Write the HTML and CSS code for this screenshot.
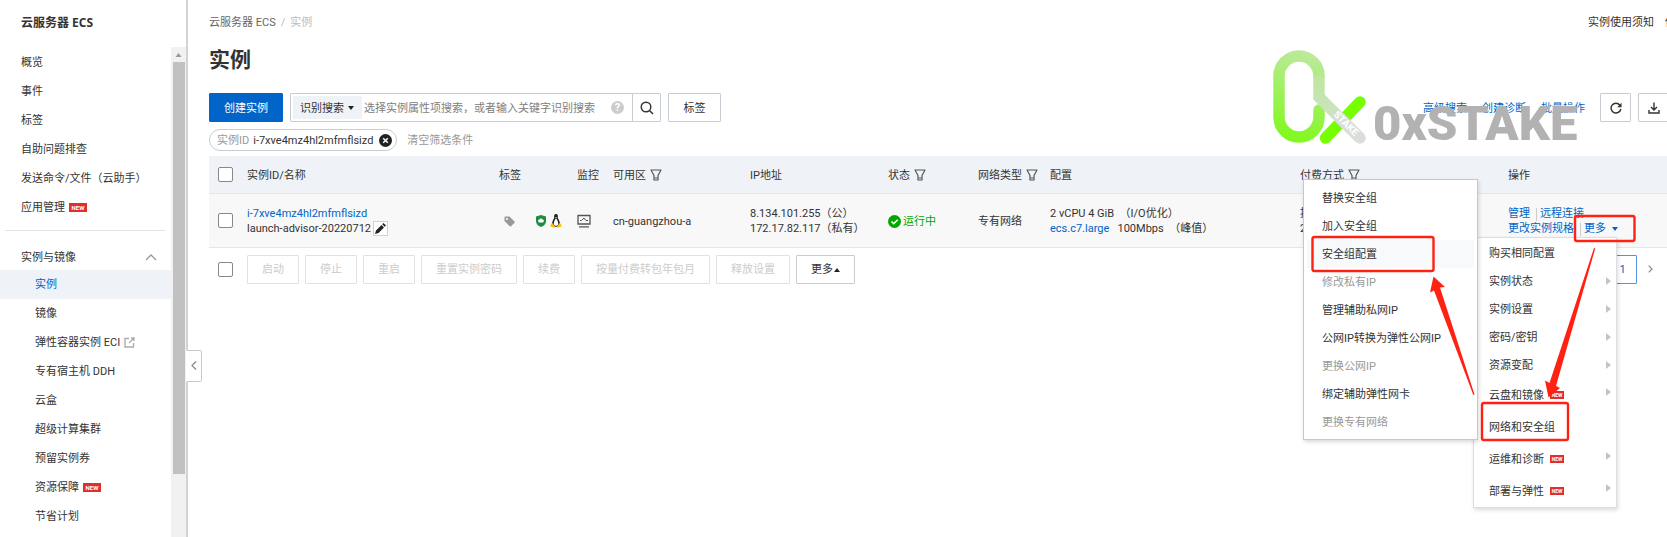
FILE: index.html
```
<!DOCTYPE html>
<html lang="zh-CN">
<head>
    <meta charset="UTF-8" />
    <meta name="viewport" content="width=device-width, initial-scale=1.0"/>
    <title>云服务器 ECS - 实例</title>
    <link rel="stylesheet" href="styles.css">
</head>
<body>

<!-- shared icons -->
<svg class="defs" width="0" height="0" aria-hidden="true">
    <symbol id="filter" viewBox="0 0 12 12">
        <path d="M1 1h10L8 6.500v4.500H4V6.500z" fill="none" stroke="#555" stroke-width="1.200" stroke-linejoin="round"/>
        <path d="M4.500 9h3" stroke="#555"/>
    </symbol>
</svg>

<div class="app">
    <aside class="sidebar">
        <div class="product">云服务器 ECS</div>
        <div class="nav-wrap">
            <nav class="nav">
                <ul class="nav-list">
                    <li><a href="#">概览</a></li>
                    <li><a href="#">事件</a></li>
                    <li><a href="#">标签</a></li>
                    <li><a href="#">自助问题排查</a></li>
                    <li><a href="#">发送命令/文件（云助手）</a></li>
                    <li><a href="#">应用管理 <span class="new">NEW</span></a></li>
                </ul>
                <button type="button" class="group">实例与镜像
                    <svg width="12" height="7" viewBox="0 0 12 7"><path d="M1 6l5-5 5 5" fill="none" stroke="#999" stroke-width="1.300"/></svg>
                </button>
                <ul class="nav-list sub">
                    <li class="active"><a href="#">实例</a></li>
                    <li><a href="#">镜像</a></li>
                    <li><a href="#">弹性容器实例 ECI
                        <svg width="11" height="11" viewBox="0 0 11 11"><path d="M5 1.500H1v8.500h8.500V6M7 1h3v3M10 1L5 6" fill="none" stroke="#aaa" stroke-width="1.300"/></svg></a></li>
                    <li><a href="#">专有宿主机 DDH</a></li>
                    <li><a href="#">云盒</a></li>
                    <li><a href="#">超级计算集群</a></li>
                    <li><a href="#">预留实例券</a></li>
                    <li><a href="#">资源保障 <span class="new">NEW</span></a></li>
                    <li><a href="#">节省计划</a></li>
                </ul>
            </nav>
            <div class="scrollbar">
                <svg width="15" height="15" viewBox="0 0 15 15"><path d="M4.500 10L7.500 6l3 4z" fill="#999"/></svg>
                <div class="thumb"></div>
            </div>
        </div>
        <button type="button" class="collapse" aria-label="收起">
            <svg width="6" height="9" viewBox="0 0 6 9"><path d="M5 .5l-4 4 4 4" fill="none" stroke="#888" stroke-width="1.200"/></svg>
        </button>
    </aside>

    <main class="main">
        <header class="top">
            <div class="breadcrumb"><a href="#">云服务器 ECS</a><span>/</span><span>实例</span></div>
            <div class="top-links"><a href="#">实例使用须知</a><a href="#">使用文档</a></div>
        </header>
        <h1>实例</h1>

        <div class="toolbar">
            <button type="button" class="btn primary">创建实例</button>
            <div class="search">
                <div class="search-type">
                    <select aria-label="搜索方式"><option>识别搜索</option></select>
                    <svg width="6" height="4" viewBox="0 0 6 4"><path d="M0 0h6L3 4z" fill="#222"/></svg>
                </div>
                <input type="text" aria-label="搜索实例" placeholder="选择实例属性项搜索，或者输入关键字识别搜索">
                <span class="help">?</span>
                <button type="button" class="search-btn" aria-label="搜索">
                    <svg width="14" height="14" viewBox="0 0 14 14"><circle cx="6" cy="6" r="4.800" fill="none" stroke="#333" stroke-width="1.400"/><path d="M9.500 9.500l3.500 3.500" stroke="#333" stroke-width="1.500"/></svg>
                </button>
            </div>
            <button type="button" class="btn">标签</button>
            <div class="tools">
                <a href="#">高级搜索</a>
                <a href="#">创建诊断</a>
                <a href="#">批量操作</a>
                <button type="button" class="icon-btn" aria-label="刷新">
                    <svg width="12" height="12" viewBox="0 0 12 12"><path d="M9.800 3A4.900 4.900 0 1 0 10.800 7" fill="none" stroke="#333" stroke-width="1.400"/><path d="M11.500.8v4.400H7.200z" fill="#333"/></svg>
                </button>
                <button type="button" class="icon-btn" aria-label="导出">
                    <svg width="12" height="12" viewBox="0 0 12 12"><path d="M6 .5v7M3 5l3 3 3-3M1 8v3h10V8" fill="none" stroke="#333" stroke-width="1.400"/></svg>
                </button>
            </div>
        </div>

        <div class="filters">
            <span class="chip"><span>实例ID</span> i-7xve4mz4hl2mfmflsizd
                <button type="button" aria-label="移除">
                    <svg width="13" height="13" viewBox="0 0 13 13"><circle cx="6.500" cy="6.500" r="6.500" fill="#222"/><path d="M4.200 4.200l4.600 4.600M8.800 4.200L4.200 8.800" stroke="#fff" stroke-width="1.500"/></svg>
                </button>
            </span>
            <a href="#">清空筛选条件</a>
        </div>

        <table class="instances">
            <colgroup>
                <col class="c-check"><col class="c-id"><col class="c-tag"><col class="c-mon"><col class="c-zone"><col class="c-ip">
                <col class="c-state"><col class="c-net"><col class="c-conf"><col class="c-pay"><col>
            </colgroup>
            <thead>
                <tr>
                    <th class="check"><input type="checkbox" aria-label="全选"></th>
                    <th>实例ID/名称</th>
                    <th>标签</th>
                    <th>监控</th>
                    <th>可用区 <svg class="filter"><use href="#filter"/></svg></th>
                    <th>IP地址</th>
                    <th>状态 <svg class="filter"><use href="#filter"/></svg></th>
                    <th>网络类型 <svg class="filter"><use href="#filter"/></svg></th>
                    <th>配置</th>
                    <th>付费方式 <svg class="filter"><use href="#filter"/></svg></th>
                    <th>操作</th>
                </tr>
            </thead>
            <tbody>
                <tr>
                    <td class="check"><input type="checkbox" aria-label="选择实例"></td>
                    <td>
                        <a href="#">i-7xve4mz4hl2mfmflsizd</a>
                        <div class="name">launch-advisor-20220712<button type="button" class="edit" aria-label="编辑名称">
                            <svg width="11" height="11" viewBox="0 0 11 11"><path d="M0 11l1-3.500 5.500-5.500 2.500 2.500L3.500 10zM7.200 1.300L8.500 0 11 2.500 9.700 3.800z" fill="#222"/></svg>
                        </button></div>
                    </td>
                    <td>
                        <div class="marks">
                            <svg class="tag" width="11" height="11" viewBox="0 0 11 11"><path d="M.5 1.500a1 1 0 0 1 1-1H5.500L10.500 5.500a1 1 0 0 1 0 1.200L7 10.200a1 1 0 0 1-1.300 0L.5 5z" fill="#999"/><circle cx="3" cy="3" r="1" fill="#fff"/></svg>
                            <svg width="10" height="12" viewBox="0 0 10 12"><path d="M5 0l5 1.500V6c0 3-2 5-5 6-3-1-5-3-5-6V1.500z" fill="#1e8e3e"/><path d="M2.200 6.500a1.400 1.400 0 0 1 1-2 2 2 0 0 1 3.500 0 1.400 1.400 0 0 1 1 2A1.500 1.500 0 0 1 6.500 7.500h-3a1.500 1.500 0 0 1-1.300-1z" fill="#fff"/></svg>
                            <svg width="12" height="14" viewBox="0 0 12 14"><path d="M6 0C4 0 4 2 4.200 4 3 6 1.800 8 2 11l4 2 4-2c.2-3-1-5-2.200-7C8 2 8 0 6 0z" fill="#222"/><path d="M6 4.500C4.500 6 3.500 8 3.800 11L6 12l2.200-1C8.500 8 7.500 6 6 4.500z" fill="#fff"/><path d="M4.800 3.300h2.400L6 4.800zM2.300 9l2.700 3.500-.8 1.300L.3 12.500 1 10zM9.700 9L7 12.500l.8 1.300 3.900-1.300L11 10z" fill="#fcbf10"/></svg>
                        </div>
                    </td>
                    <td><svg class="monitor" width="14" height="14" viewBox="0 0 14 14"><path d="M1 1.500h12v8.500H1zM2 12.800h10" fill="none" stroke="#555" stroke-width="1.300"/><path d="M3 6.500h1.500L7 4l2 2.500h2" fill="none" stroke="#555"/></svg></td>
                    <td>cn-guangzhou-a</td>
                    <td>8.134.101.255（公）<br>172.17.82.117（私有）</td>
                    <td><span class="running"><svg width="13" height="13" viewBox="0 0 13 13"><circle cx="6.500" cy="6.500" r="6.500" fill="#00a700"/><path d="M3.500 6.500l2.200 2.200 4-4" fill="none" stroke="#fff" stroke-width="1.600"/></svg>运行中</span></td>
                    <td>专有网络</td>
                    <td>2 vCPU 4 GiB &nbsp;（I/O优化）<br><a href="#">ecs.c7.large</a> &nbsp; 100Mbps &nbsp;（峰值）</td>
                    <td>按量<br>2022年</td>
                    <td class="ops">
                        <a href="#">管理</a><i></i><a href="#">远程连接</a><br>
                        <a href="#">更改实例规格</a><i></i><a href="#">更多 <svg width="6" height="4" viewBox="0 0 6 4"><path d="M0 0h6L3 4z" fill="#0064c8"/></svg></a>
                    </td>
                </tr>
            </tbody>
        </table>

        <footer class="batch">
            <input type="checkbox" aria-label="全选">
            <div class="batch-buttons">
                <button type="button" class="btn" disabled>启动</button>
                <button type="button" class="btn" disabled>停止</button>
                <button type="button" class="btn" disabled>重启</button>
                <button type="button" class="btn" disabled>重置实例密码</button>
                <button type="button" class="btn" disabled>续费</button>
                <button type="button" class="btn" disabled>按量付费转包年包月</button>
                <button type="button" class="btn" disabled>释放设置</button>
                <button type="button" class="btn more">更多<svg width="6" height="4" viewBox="0 0 6 4"><path d="M0 4h6L3 0z" fill="#222"/></svg></button>
            </div>
            <div class="pager">
                <button type="button" class="page">1</button>
                <button type="button" class="next" aria-label="下一页"><svg width="5" height="8" viewBox="0 0 5 8"><path d="M.7.7L4 4 .7 7.300" fill="none" stroke="#888" stroke-width="1.200"/></svg></button>
            </div>
        </footer>
    </main>

    <!-- "more" menu of the row -->
    <ul class="menu menu-more">
        <li><a href="#">购买相同配置</a></li>
        <li class="parent"><a href="#">实例状态</a></li>
        <li class="parent"><a href="#">实例设置</a></li>
        <li class="parent"><a href="#">密码/密钥</a></li>
        <li class="parent"><a href="#">资源变配</a></li>
        <li class="parent tall"><a href="#">云盘和镜像</a><span class="new small">NEW</span></li>
        <li class="tall"><a href="#">网络和安全组</a></li>
        <li class="parent tall"><a href="#">运维和诊断</a><span class="new small">NEW</span></li>
        <li class="parent tall"><a href="#">部署与弹性</a><span class="new small">NEW</span></li>
    </ul>

    <!-- submenu: network and security group -->
    <ul class="menu menu-network">
        <li><a href="#">替换安全组</a></li>
        <li><a href="#">加入安全组</a></li>
        <li class="hover"><a href="#">安全组配置</a></li>
        <li class="off"><a href="#">修改私有IP</a></li>
        <li><a href="#">管理辅助私网IP</a></li>
        <li><a href="#">公网IP转换为弹性公网IP</a></li>
        <li class="off"><a href="#">更换公网IP</a></li>
        <li><a href="#">绑定辅助弹性网卡</a></li>
        <li class="off"><a href="#">更换专有网络</a></li>
    </ul>

    <!-- steps to follow -->
    <svg class="steps" width="330" height="230" viewBox="1310 214 330 230">
        <g fill="none" stroke="#ff2213" stroke-width="2.400">
            <rect x="1575" y="216" width="59.500" height="25" rx="2"/>
            <rect x="1482" y="403" width="86" height="37" rx="2"/>
            <rect x="1312.500" y="237" width="121" height="34" rx="2"/>
        </g>
        <g fill="#ff2213">
            <path d="M1594 248l1.200.5L1556 386l4 2-11.500 9.500-3.500-17 4.500 2.500z"/>
            <path d="M1474.500 394.500l-1.200.5L1434 290.500l-4 2 3.500-16 11.500 10.500-5 .5z"/>
        </g>
    </svg>

    <!-- watermark -->
    <svg class="watermark" width="310" height="100" viewBox="1270 47 310 100">
        <defs>
            <linearGradient id="ring" gradientUnits="userSpaceOnUse" x1="1325" y1="60" x2="1300" y2="143">
                <stop offset="0" stop-color="#bce99a"/><stop offset="1" stop-color="#80f91c"/>
            </linearGradient>
            <linearGradient id="bar" gradientUnits="userSpaceOnUse" x1="1319" y1="70" x2="1350" y2="138">
                <stop offset="0" stop-color="#bbe89b"/><stop offset="1" stop-color="#dadeda"/>
            </linearGradient>
        </defs>
        <g fill="none" stroke-width="11.500" stroke-linecap="round">
            <path d="M1319 110v7a20 20 0 0 1-40 0V76a20 20 0 0 1 40 0" stroke="url(#ring)"/>
            <path d="M1360 102l-34.500 36" stroke="#75ff00"/>
            <path d="M1319 76v21l41 41" stroke="url(#bar)" stroke-linecap="butt"/>
            <path d="M1340 118l20 20" stroke="#dadeda"/>
        </g>
        <text class="stamp" transform="translate(1333 115) rotate(45)">STAKE</text>
        <text class="wordmark" x="1373" y="140">0xSTAKE</text>
    </svg>
</div>

</body>
</html>
```
FILE: styles.css
```
* { box-sizing: border-box; }
body {
    margin: 0;
    font: 11px/15px Roboto, "Noto Sans CJK SC", sans-serif;
    color: #333;
    background: #fff;
}
a { color: inherit; text-decoration: none; }
ul { list-style: none; margin: 0; padding: 0; }
button, input, select { font: inherit; color: inherit; margin: 0; }
button { cursor: pointer; }
svg { flex: none; }
.defs { position: absolute; }
.app {
    position: relative;
    display: flex;
    height: 100vh;
    overflow: hidden;
}

/* sidebar */
.sidebar {
    position: relative;
    display: flex;
    flex-direction: column;
    flex: none;
    width: 188px;
    border-right: 2px solid #d2d3d6;
}
.product {
    padding: 15px 21px 17px;
    font-family: "Open Sans", "Noto Sans CJK SC", sans-serif;
    font-size: 12px;
    font-weight: bold;
}
.nav-wrap { display: flex; flex: 1; min-height: 0; }
.nav { flex: 1; padding-top: 1px; overflow: hidden; }
.nav-list li { padding-left: 21px; white-space: nowrap; }
.nav-list a {
    display: flex;
    align-items: center;
    gap: 4px;
    height: 29px;
}
.nav-list.sub li { padding-left: 35px; }
.nav-list .active { background: #eff3f8; color: #0064c8; }
.new {
    display: inline-block;
    width: 18px;
    background: #e02f2c;
    color: #fff;
    font-size: 6px;
    line-height: 9px;
    font-weight: bold;
    text-align: center;
}
.new.small { width: 14px; font-size: 5px; line-height: 8px; }
.group {
    display: flex;
    align-items: center;
    justify-content: space-between;
    width: 160px;
    margin: 8px 0 0 5px;
    padding: 19px 8px 5px 16px;
    border: 0;
    border-top: 1px solid #e3e4e6;
    background: none;
}
.scrollbar { width: 15px; background: #f1f1f1; }
.scrollbar svg { display: block; }
.thumb { height: 84%; margin: 0 1px 0 2px; background: #c1c1c1; }
.collapse {
    position: absolute;
    top: 350px;
    left: 186px;
    width: 16px;
    height: 32px;
    padding: 0;
    border: 1px solid #c6cad0;
    border-left-color: #fff;
    border-radius: 0 2px 2px 0;
    background: #fff;
}

/* header */
.main { flex: 1; min-width: 0; padding-left: 21px; overflow: hidden; }
.top {
    display: flex;
    justify-content: space-between;
    margin-right: -42px;
    padding-top: 15px;
}
.breadcrumb { display: flex; gap: 5px; color: #666; }
.breadcrumb span { color: #bbb; }
.top-links { display: flex; gap: 11px; }
h1 { margin: 14px 0 17px; font-size: 21px; line-height: 32px; }
.toolbar { display: flex; gap: 7px; margin-right: -2px; }
.btn {
    height: 29px;
    padding: 1px 14px 0;
    border: 1px solid #c8cdd4;
    border-radius: 1px;
    background: #fff;
    white-space: nowrap;
}
.btn:disabled { color: #ccc; border-color: #dfe1e4; cursor: default; }
.btn.primary { background: #0064c8; border-color: #0064c8; color: #fff; }
.search {
    display: flex;
    align-items: center;
    width: 371px;
    height: 29px;
    padding-left: 2px;
    border: 1px solid #c8cdd4;
    border-radius: 1px;
}
.search-type {
    display: flex;
    align-items: center;
    height: 23px;
    padding: 0 8px 0 7px;
    background: #eff3f8;
}
.search-type select {
    appearance: none;
    width: 48px;
    padding: 1px 0 0;
    border: 0;
    background: none;
}
.search input {
    flex: 1;
    min-width: 0;
    padding: 1px 2px 0;
    border: 0;
    outline: 0;
}
.search input::placeholder { color: #808080; }
.help {
    width: 13px;
    margin-right: 8px;
    border-radius: 50%;
    background: #ccc;
    color: #fff;
    font-weight: bold;
    line-height: 13px;
    text-align: center;
}
.search-btn {
    display: grid;
    place-items: center;
    width: 28px;
    height: 27px;
    padding: 0;
    border: 0;
    border-left: 1px solid #c8cdd4;
    background: none;
}
.toolbar > .btn:not(.primary) { width: 53px; }
.tools { display: flex; align-items: center; gap: 7px; margin-left: auto; color: #0064c8; }
.tools a { margin-right: 8px; padding-top: 1px; }
.icon-btn {
    display: grid;
    place-items: center;
    width: 31px;
    height: 29px;
    padding: 0;
    border: 1px solid #c8cdd4;
    border-radius: 1px;
    background: #fff;
}
.filters { display: flex; align-items: center; gap: 10px; padding: 7px 0 5px; color: #999; }
.chip {
    display: flex;
    align-items: center;
    gap: 4px;
    height: 22px;
    padding: 0 4px 0 7px;
    border: 1px solid #c8cdd4;
    border-radius: 11px;
    color: #333;
}
.chip span { color: #999; }
.chip button { display: flex; margin-left: 2px; padding: 0; border: 0; background: none; }

/* table */
.instances { width: 100%; border-collapse: collapse; table-layout: fixed; }
.c-check { width: 38px; }
.c-id { width: 252px; }
.c-tag { width: 78px; }
.c-mon { width: 36px; }
.c-zone { width: 137px; }
.c-ip { width: 138px; }
.c-state { width: 90px; }
.c-net { width: 72px; }
.c-conf { width: 250px; }
.c-pay { width: 208px; }
th, td {
    padding: 2px 0 0;
    border-bottom: 1px solid #e3e6ea;
    text-align: left;
    white-space: nowrap;
}
th { height: 37px; background: #eff3f8; font-weight: normal; }
td { height: 54px; background: #f8f8f8; }
td a { color: #0064c8; }
.check { padding: 0 0 0 9px; }
input[type="checkbox"] {
    appearance: none;
    display: block;
    width: 15px;
    height: 15px;
    border: 1px solid #888;
    border-radius: 2px;
    background: #fff;
}
.filter { width: 12px; height: 12px; margin-left: 1px; vertical-align: -2px; }
.name { display: flex; align-items: center; gap: 2px; height: 15px; }
.edit {
    display: grid;
    place-items: center;
    width: 15px;
    height: 15px;
    padding: 0;
    border: 1px solid #ccd3da;
    background: #fff;
}
.marks { display: flex; align-items: center; gap: 4px; padding-left: 5px; }
.tag { margin-right: 17px; }
.monitor { display: block; }
.running { display: flex; align-items: center; gap: 2px; color: #00a700; }
.ops i {
    display: inline-block;
    width: 1px;
    height: 13px;
    margin: 0 3px 0 6px;
    background: #ccc;
    vertical-align: -4px;
}
.ops svg { margin: 0 0 1px 3px; }

/* batch bar */
.batch { display: flex; align-items: center; padding: 7px 14px 0 9px; }
.batch-buttons { display: flex; gap: 6px; margin-left: 14px; }
.more svg { margin: 0 0 1px 1px; }
.pager { display: flex; margin-left: auto; }
.page {
    width: 29px;
    height: 29px;
    border: 1px solid #4f94dc;
    border-radius: 1px;
    background: #fff;
    color: #0064c8;
}
.next { padding: 0 0 0 11px; border: 0; background: none; }

/* menus */
.menu {
    position: absolute;
    background: #fff;
    border: 1px solid #c4c9d0;
    box-shadow: 1px 2px 4px rgba(0, 0, 0, .15);
}
.menu li { display: flex; align-items: center; height: 28px; white-space: nowrap; }
.menu-more {
    top: 237px;
    left: 1473px;
    width: 144px;
    padding: 1px 5px 0 15px;
    border-color: #dcdee2;
}
.menu-more .tall { height: 32px; }
.menu-more .new { margin-left: 6px; }
.parent::after {
    content: "";
    margin-left: auto;
    border: 4px solid transparent;
    border-left: 5px solid #c4c4c4;
    border-right: 0;
}
.parent.tall::after { margin-bottom: 6px; }
.menu-network {
    top: 179px;
    left: 1303px;
    width: 175px;
    padding: 4px 3px 3px;
}
.menu-network li { padding-left: 15px; }
.menu-network .hover { background: #f7f9fb; }
.menu-network .off { color: #999; }

/* overlays */
.steps { position: absolute; top: 214px; left: 1310px; }
.watermark { position: absolute; top: 47px; left: 1270px; }
.wordmark { font: 900 49px Roboto, sans-serif; fill: #b2b2b2; }
.stamp { font: bold 10px Roboto, sans-serif; fill: #fff; }
```
